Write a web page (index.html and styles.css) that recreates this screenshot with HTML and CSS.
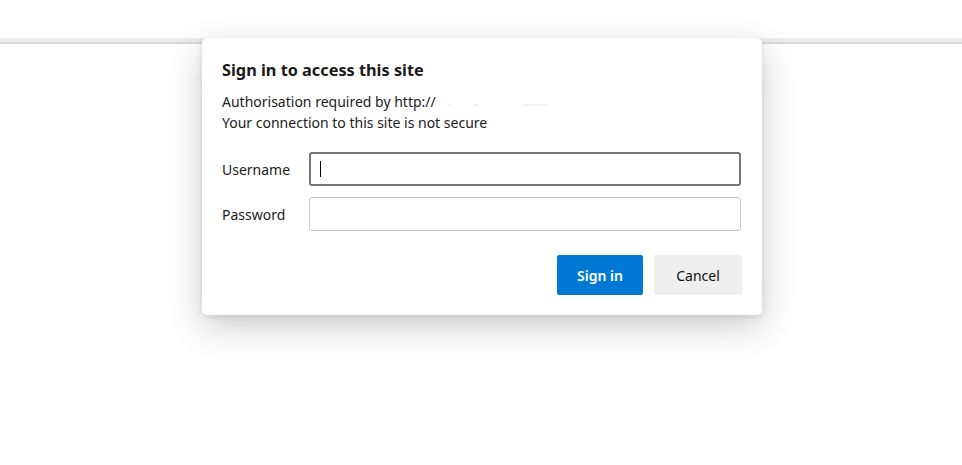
FILE: index.html
```html
<!DOCTYPE html>
<html lang="en">
<head>
<meta charset="utf-8">
<title>Sign in</title>
<link rel="stylesheet" href="styles.css">
</head>
<body>
<div class="page">
  <div class="topbar"></div>
  <div class="dialog">
    <h1 class="title">Sign in to access this site</h1>
    <p class="info">Authorisation required by http://<span class="redacted">&nbsp;&nbsp;&nbsp;&nbsp;&nbsp;&nbsp;&nbsp;&nbsp;&nbsp;&nbsp;&nbsp;&nbsp;&nbsp;&nbsp;&nbsp;&nbsp;&nbsp;&nbsp;&nbsp;&nbsp;&nbsp;&nbsp;&nbsp;&nbsp;&nbsp;&nbsp;&nbsp;&nbsp;&nbsp;&nbsp;&nbsp;&nbsp;&nbsp;&nbsp;</span><br>Your connection to this site is not secure</p>
    <div class="form">
      <label class="label" for="u">Username</label>
      <div class="field focused"><input id="u" class="input" type="text"><span class="caret"></span></div>
      <label class="label" for="p">Password</label>
      <div class="field"><input id="p" class="input" type="password"></div>
    </div>
    <div class="actions">
      <button class="btn primary">Sign in</button>
      <button class="btn secondary">Cancel</button>
    </div>
  </div>
</div>
</body>
</html>
```
FILE: styles.css
```css
html, body {
  margin: 0;
  padding: 0;
  background: #ffffff;
}
body {
  font-family: "Noto Sans", "Open Sans", "Liberation Sans", sans-serif;
  color: #1b1b1b;
}
.page {
  position: relative;
  width: 962px;
  height: 465px;
  padding-top: 38px;
  box-sizing: border-box;
}
.topbar {
  height: 4px;
  background: #ececec;
  border-bottom: 2px solid #dadada;
}
.dialog {
  position: absolute;
  left: 202px;
  top: 38px;
  width: 560px;
  height: 277px;
  box-sizing: border-box;
  padding: 20px 20px 0 20px;
  background: #ffffff;
  border-radius: 5px;
  box-shadow: 0 12px 36px rgba(0, 0, 0, 0.2), 0 2px 6px rgba(0, 0, 0, 0.1);
}
.title {
  margin: 0 0 9px 0;
  font-size: 16.3px;
  font-weight: 700;
  line-height: 24px;
  color: #1a1a1a;
}
.info {
  margin: 0;
  font-size: 14px;
  line-height: 21px;
  color: #1b1b1b;
}
.redacted {
  background: linear-gradient(90deg, transparent 0, transparent 10%, #f5f5f5 10%, #f5f5f5 12%, transparent 12%, transparent 30%, #f2f2f2 30%, #f2f2f2 34%, transparent 34%, transparent 70%, #f2f2f2 70%, #f2f2f2 90%, transparent 90%);
  background-size: 100% 2px;
  background-repeat: no-repeat;
  background-position: 0 12px;
}
.form {
  display: grid;
  grid-template-columns: 87px 432px;
  row-gap: 11px;
  align-items: center;
  margin-top: 19px;
}
.label {
  font-size: 14px;
  color: #1b1b1b;
}
.field {
  position: relative;
  height: 34px;
}
.input {
  box-sizing: border-box;
  width: 100%;
  height: 34px;
  margin: 0;
  padding: 0 10px;
  border: 1px solid #c8c8c8;
  border-radius: 3px;
  background: #ffffff;
  font: inherit;
  outline: none;
}
.focused .input {
  border: 2px solid #767676;
}
.caret {
  position: absolute;
  left: 11px;
  top: 9px;
  width: 1px;
  height: 16px;
  background: #000000;
}
.actions {
  display: flex;
  justify-content: flex-end;
  gap: 11px;
  margin-top: 24px;
}
.btn {
  height: 40px;
  border: none;
  border-radius: 2px;
  font-family: inherit;
  font-size: 14px;
  font-weight: 600;
  cursor: pointer;
}
.primary {
  width: 86px;
  background: #0078d4;
  color: #ffffff;
}
.secondary {
  width: 88px;
  background: #efefef;
  color: #111111;
  font-weight: 400;
}
```
